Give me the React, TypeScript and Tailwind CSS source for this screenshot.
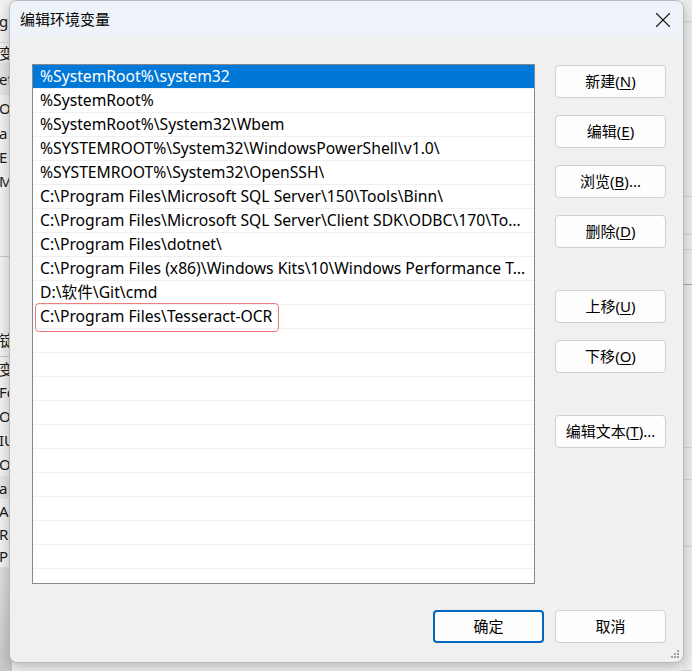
import { X } from "lucide-react";

const paths = [
  "%SystemRoot%\\system32",
  "%SystemRoot%",
  "%SystemRoot%\\System32\\Wbem",
  "%SYSTEMROOT%\\System32\\WindowsPowerShell\\v1.0\\",
  "%SYSTEMROOT%\\System32\\OpenSSH\\",
  "C:\\Program Files\\Microsoft SQL Server\\150\\Tools\\Binn\\",
  "C:\\Program Files\\Microsoft SQL Server\\Client SDK\\ODBC\\170\\Tools\\Binn\\",
  "C:\\Program Files\\dotnet\\",
  "C:\\Program Files (x86)\\Windows Kits\\10\\Windows Performance Toolkit\\",
  "D:\\软件\\Git\\cmd",
  "C:\\Program Files\\Tesseract-OCR",
];

const font = "font-['Segoe_UI','Noto_Sans','Noto_Sans_CJK_SC',sans-serif]";

const Btn = ({ label, hint, tail = "", primary = false }: { label: string; hint: string; tail?: string; primary?: boolean }) => (
  <button
    className={`h-[33px] w-[111px] rounded-[4px] bg-[#fdfdfd] text-[15px] text-black ${font} ${
      primary ? "border-2 border-[#0067c0]" : "border border-[#d0d0d0]"
    }`}
  >
    {label}
    {hint && (
      <>
        (<span className="underline underline-offset-2">{hint}</span>){tail}
      </>
    )}
  </button>
);

// the window behind the dialog only peeks out at the edges
const leftRows = [
  { h: 43, t: "g", line: true },
  { h: 19, t: "变" },
  { h: 33, t: "et", hi: true },
  { h: 25, t: "Or" },
  { h: 25, t: "a" },
  { h: 24, t: "E" },
  { h: 24, t: "M" },
  { h: 64, t: "", line: true, dark: true },
  { h: 100, t: "锭", line: true, dark: true, end: true },
  { h: 23, t: "变" },
  { h: 24, t: "Fo" },
  { h: 24, t: "Or" },
  { h: 24, t: "IU" },
  { h: 24, t: "OS" },
  { h: 23, t: "a", hi: true },
  { h: 23, t: "A" },
  { h: 23, t: "R" },
  { h: 22, t: "P" },
];

const rightRows = [22, 175, 38, 15, 35, 163, 32, 67, 124];

export default function App() {
  const rows = Array.from({ length: 22 }, (_, i) => paths[i] ?? "");

  return (
    <div className={`relative flex h-[671px] w-[692px] justify-between overflow-hidden bg-[#f3f3f3] ${font}`}>
      {/* background window, left strip */}
      <div className="flex w-[12px] flex-col overflow-hidden">
        {leftRows.map((r, i) => (
          <div
            key={i}
            className={`flex shrink-0 overflow-hidden text-[15px] leading-[20px] text-[#1a1a1a] ${r.end ? "items-end pb-[6px]" : "items-center"} ${
              r.hi ? "bg-[#e6e6e6]" : ""
            } ${r.line ? (r.dark ? "border-b border-[#c8c8c8]" : "border-b border-[#d9d9d9]") : ""}`}
            style={{ height: r.h }}
          >
            <span className="-ml-px whitespace-nowrap">{r.t}</span>
          </div>
        ))}
        <div className="flex-1 bg-gradient-to-b from-[#dedede] to-[#c9c9c9]" />
      </div>

      {/* background window, right strip */}
      <div className="flex w-[10px] flex-col bg-[#eeeeee]">
        {rightRows.map((h, i) => (
          <div key={i} className={`shrink-0 border-b ${i === 4 ? "border-[#a8a8a8]" : "border-[#d6d6d6]"}`} style={{ height: h }} />
        ))}
      </div>

      {/* dialog */}
      <div className="absolute left-[9px] top-0 flex h-[663px] w-[675px] flex-col overflow-hidden rounded-lg border border-[#b9b9b9] bg-[#f0f0f0] shadow-[0_4px_14px_rgba(0,0,0,0.25)]">
        <div className="flex h-[37px] shrink-0 items-center justify-between bg-[#eef3f9] pl-[10px] pr-[7px]">
          <span className="text-[15px] text-black">编辑环境变量</span>
          <X size={26} className="text-[#1a1a1a]" strokeWidth={1.05} />
        </div>

        <div className="flex flex-1 flex-col pl-[22px] pr-[17px] pt-[26px]">
          <div className="flex gap-[20px]">
            <div className="h-[520px] w-[503px] overflow-hidden border border-[#828790] bg-white">
              {rows.map((p, i) => (
                <div
                  key={i}
                  className={`relative flex h-[24px] items-center border-b border-[#f0f0f0] pl-[7px] pr-[4px] text-[15.7px] ${
                    i === 0 ? "bg-[#0078d7] text-white" : "text-black"
                  }`}
                >
                  <span className="truncate">{p}</span>
                  {i === 10 && (
                    <div className="absolute left-[2px] top-[-2px] h-[29px] w-[244px] rounded-[4px] border-[1.5px] border-[#ef7b7b]" />
                  )}
                </div>
              ))}
            </div>

            <div className="flex flex-col pt-px">
              <div className="flex flex-col gap-[17px]">
                <Btn label="新建" hint="N" />
                <Btn label="编辑" hint="E" />
                <Btn label="浏览" hint="B" tail="..." />
                <Btn label="删除" hint="D" />
              </div>
              <div className="mt-[42px] flex flex-col gap-[17px]">
                <Btn label="上移" hint="U" />
                <Btn label="下移" hint="O" />
              </div>
              <div className="mt-[42px]">
                <Btn label="编辑文本" hint="T" tail="..." />
              </div>
            </div>
          </div>

          <div className="mt-[26px] flex justify-end gap-[11px]">
            <Btn label="确定" hint="" primary />
            <Btn label="取消" hint="" />
          </div>
        </div>

        {/* resize grip */}
        <svg className="absolute bottom-[3px] right-[3px]" width="10" height="10" viewBox="0 0 10 10">
          <g fill="#a0a0a0">
            <rect x="7" y="1" width="2" height="2" />
            <rect x="4" y="4" width="2" height="2" />
            <rect x="7" y="4" width="2" height="2" />
            <rect x="1" y="7" width="2" height="2" />
            <rect x="4" y="7" width="2" height="2" />
            <rect x="7" y="7" width="2" height="2" />
          </g>
        </svg>
      </div>
    </div>
  );
}
